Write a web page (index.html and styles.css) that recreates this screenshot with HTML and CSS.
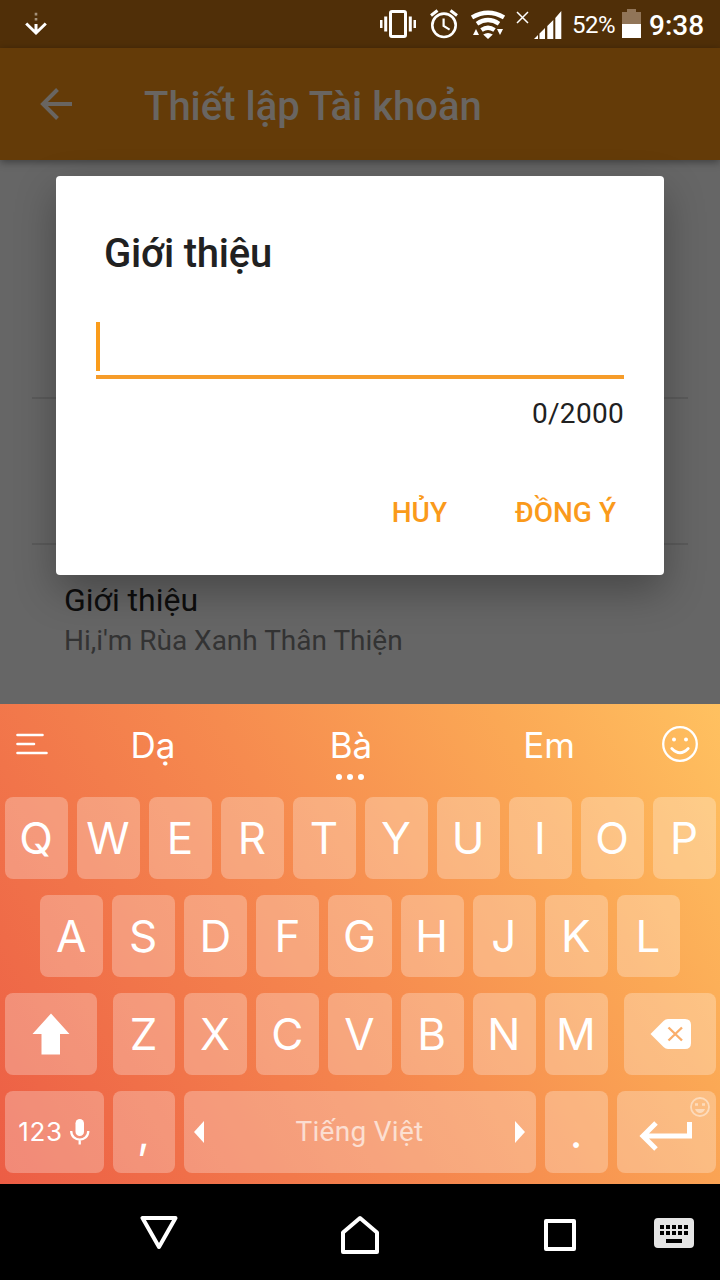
FILE: index.html
```html
<!DOCTYPE html>
<html lang="vi">
<head>
    <meta charset="UTF-8">
    <meta name="viewport" content="width=device-width, initial-scale=1.0">
    <title>Thiết lập Tài khoản</title>
    <link rel="stylesheet" href="styles.css">
</head>
<body>
    <div class="phone">
        <div class="status-bar">
            <svg class="download" width="24" height="48" viewBox="0 0 24 48">
                <path d="M10.7 12.8h2.6v2.6h-2.6zM10.7 18h2.6v2.6h-2.6z" fill="#a4917a"/>
                <path d="M12 24v8M2.200 23.500l9.800 9.500 9.800-9.500" fill="none" stroke="#fff" stroke-width="3"/>
            </svg>
            <div class="status-icons">
                <svg width="36" height="48" viewBox="0 0 36 48" fill="#fff">
                    <rect x="10.500" y="11.500" width="15" height="25" rx="1.500" fill="none" stroke="#fff" stroke-width="3"/>
                    <path d="M0 20h2.500v8H0zM4.200 16.500h3v15h-3zM28.800 16.500h3v15h-3zM33.500 20H36v8h-2.500z"/>
                </svg>
                <svg class="alarm" width="28" height="48" viewBox="0 0 28 48" fill="none" stroke="#fff">
                    <circle cx="14" cy="25.300" r="11.700" stroke-width="2.600"/>
                    <path d="M1 15.500l6.500-5M27 15.500l-6.500-5" stroke-width="3"/>
                    <path d="M13.600 18.500v7.500l6 3.600" stroke-width="2.200"/>
                </svg>
                <svg class="wifi" width="34" height="48" viewBox="0 0 34 48" fill="none" stroke="#fff">
                    <path d="M1 17.500q16-9.500 32 0M6 23.800q11-7.500 22 0M10.500 30q6.500-4.500 13 0" stroke-width="4.300"/>
                    <path d="M12.200 34.500q4.800-3 9.600 0L17 39zM2 35h6l-3-6zM26 29h6l-3 6z" fill="#fff" stroke="none"/>
                </svg>
                <svg class="signal" width="46" height="48" viewBox="0 0 46 48" fill="#fff">
                    <path d="M1 12l11 11M12 12L1 23" stroke="#fff" stroke-width="1.500"/>
                    <path d="M18 39l4-4v4zM23.500 33.500l5.500-5.500v11h-5.500zM31.300 26l6-6v19h-6zM39.300 18l6-7v28h-6z"/>
                </svg>
                <span class="percent">52%</span>
                <svg class="battery" width="19" height="48" viewBox="0 0 19 48">
                    <path d="M5 9h9v3h5v12H0V12h5z" fill="#917558"/>
                    <path d="M0 24h19v14H0z" fill="#fff"/>
                </svg>
                <span class="clock">9:38</span>
            </div>
        </div>

        <div class="app-bar">
            <svg class="back" width="32" height="32" viewBox="0 0 32 32" fill="none" stroke="#696561" stroke-width="4">
                <path d="M32 16H3M17.500 1.500L3 16l14.500 14.500"/>
            </svg>
            <h1>Thiết lập Tài khoản</h1>
        </div>

        <div class="settings">
            <div class="setting name"></div>
            <div class="setting gender"></div>
            <div class="setting intro">
                <div class="label">Giới thiệu</div>
                <div class="value">Hi,i'm Rùa Xanh Thân Thiện</div>
            </div>
        </div>

        <div class="dialog">
            <h2>Giới thiệu</h2>
            <div class="input"><span class="caret"></span></div>
            <div class="counter">0/2000</div>
            <div class="actions">
                <span>HỦY</span>
                <span>ĐỒNG Ý</span>
            </div>
        </div>

        <div class="keyboard">
            <div class="suggestions">
                <svg class="menu" width="32" height="24" viewBox="0 0 32 24" stroke="#fff" stroke-width="2.600" stroke-linecap="round">
                    <path d="M1.500 3h25M1.500 12h16.500M1.500 21h29"/>
                </svg>
                <span>Dạ</span>
                <span class="current">Bà</span>
                <span>Em</span>
                <svg class="emoji" width="36" height="36" viewBox="0 0 36 36" fill="none" stroke="#fff" stroke-width="2.300">
                    <circle cx="18" cy="18" r="16.800"/>
                    <path d="M9.800 22.500q8.200 8.500 16.400 0" stroke-width="2.800" stroke-linecap="round"/>
                    <circle cx="12" cy="13.500" r="2" fill="#fff" stroke="none"/>
                    <circle cx="24" cy="13.500" r="2" fill="#fff" stroke="none"/>
                </svg>
            </div>
            <div class="row">
                <div class="key">Q</div><div class="key">W</div><div class="key">E</div><div class="key">R</div><div class="key">T</div>
                <div class="key">Y</div><div class="key">U</div><div class="key">I</div><div class="key">O</div><div class="key">P</div>
            </div>
            <div class="row middle">
                <div class="key">A</div><div class="key">S</div><div class="key">D</div><div class="key">F</div><div class="key">G</div>
                <div class="key">H</div><div class="key">J</div><div class="key">K</div><div class="key">L</div>
            </div>
            <div class="row letters">
                <div class="key shift">
                    <svg width="38" height="42" viewBox="0 0 38 42"><path d="M19 .5L37.500 21H28v20.500H9.500V21H.5z" fill="#fff"/></svg>
                </div>
                <div class="key narrow">Z</div><div class="key">X</div><div class="key">C</div><div class="key">V</div>
                <div class="key">B</div><div class="key">N</div><div class="key">M</div>
                <div class="key delete">
                    <svg width="42" height="30" viewBox="0 0 42 30">
                        <path d="M.5 15L13.500 2Q15.500 0 18 0h17q6 0 6 6v18q0 6-6 6H18q-2.500 0-4.500-2z" fill="#fff"/>
                        <path d="M18.500 8.500l13.500 13M32 8.500l-13.500 13" stroke="#faae6b" stroke-width="2.400"/>
                    </svg>
                </div>
            </div>
            <div class="row bottom">
                <div class="key numbers">
                    <span>123</span>
                    <svg width="20" height="26" viewBox="0 0 20 26">
                        <rect x="5.500" y="0" width="8.500" height="17" rx="4.250" fill="#fff"/>
                        <path d="M1.200 12c0 11.500 17.100 11.500 17.100 0M9.700 20v5.500" fill="none" stroke="#fff" stroke-width="2.300"/>
                    </svg>
                </div>
                <div class="key narrow">,</div>
                <div class="key space">
                    <svg width="10" height="22" viewBox="0 0 10 22"><path d="M10 0v22L0 11z" fill="#fff"/></svg>
                    <span>Tiếng Việt</span>
                    <svg width="10" height="22" viewBox="0 0 10 22"><path d="M0 0v22l10-11z" fill="#fff"/></svg>
                </div>
                <div class="key period">.</div>
                <div class="key enter">
                    <svg width="54" height="30" viewBox="0 0 54 30" fill="none" stroke="#fff" stroke-width="5">
                        <path d="M50.500 1v14H4M17 2L4 15l13 13"/>
                    </svg>
                    <svg class="smile" width="20" height="20" viewBox="0 0 20 20" fill="none" stroke="#fff" stroke-width="1.800">
                        <circle cx="10" cy="10" r="9"/>
                        <path d="M5 12h10q-1.500 4-5 4t-5-4z" fill="#fff" stroke="none"/>
                        <path d="M5 7.500h3M12 7.500h3" stroke-width="2.500"/>
                    </svg>
                </div>
            </div>
        </div>

        <div class="nav-bar">
            <svg class="nav-back" width="38" height="36" viewBox="0 0 38 36"><path d="M2.500 3h33L19 32z"/></svg>
            <svg class="nav-home" width="40" height="40" viewBox="0 0 40 40"><path d="M3 37V17.500L20 3l17 14.500V37z"/></svg>
            <svg class="nav-recent" width="34" height="34" viewBox="0 0 34 34"><path d="M3 3h28v28H3z"/></svg>
            <svg class="nav-keyboard" width="40" height="30" viewBox="0 0 40 30">
                <rect x="1" y="1" width="38" height="28" rx="3"/>
                <path d="M6 9h29M6 15h29" stroke-dasharray="4 2"/>
                <path d="M12 23h16"/>
            </svg>
        </div>
    </div>
</body>
</html>
```
FILE: styles.css
```css
body {
    margin: 0;
    font-family: Roboto, sans-serif;
    background-color: #000;
}

svg {
    display: block;
    flex-shrink: 0;
}

.phone {
    position: relative;
    display: flex;
    flex-direction: column;
    width: 720px;
    height: 1280px;
    overflow: hidden;
    background-color: #666;
}

.status-bar {
    display: flex;
    justify-content: space-between;
    height: 48px;
    padding: 0 16px 0 24px;
    background-color: #502f08;
    color: #fff;
}

.status-icons {
    display: flex;
}

.alarm {
    margin-left: 14px;
}

.wifi {
    margin-left: 13px;
}

.signal {
    margin-left: 11px;
}

.percent {
    width: 43px;
    margin-left: 10px;
    font-size: 24px;
    line-height: 50px;
    letter-spacing: -0.5px;
}

.battery {
    margin-left: 7px;
}

.clock {
    width: 55px;
    margin-left: 8px;
    font-size: 28px;
    font-weight: 500;
    line-height: 52px;
}

.app-bar {
    z-index: 1;
    display: flex;
    align-items: center;
    height: 112px;
    padding-left: 40px;
    background-color: #643b08;
    box-shadow: 0 2px 8px rgba(0, 0, 0, 0.4);
}

.app-bar h1 {
    margin: 6px 0 0 72px;
    font-size: 40px;
    font-weight: 500;
    line-height: 48px;
    color: #696561;
}

.settings {
    height: 544px;
    padding: 0 32px;
}

.setting {
    box-sizing: border-box;
    border-bottom: 2px solid #5b5b5b;
}

.name {
    height: 239px;
}

.gender {
    height: 146px;
}

.intro {
    padding: 36px 32px;
    border: none;
}

.label {
    font-size: 32px;
    line-height: 38px;
    color: #0d0d0d;
}

.value {
    margin-top: 5px;
    font-size: 28px;
    line-height: 34px;
    color: #333;
}

.dialog {
    position: absolute;
    z-index: 2;
    top: 176px;
    left: 56px;
    box-sizing: border-box;
    width: 608px;
    height: 399px;
    padding: 54px 40px 0;
    border-radius: 4px;
    background-color: #fff;
    box-shadow: 0 16px 40px rgba(0, 0, 0, 0.3);
    color: #212121;
}

.dialog h2 {
    margin: 0 8px;
    font-size: 40px;
    font-weight: 500;
    line-height: 48px;
    letter-spacing: -0.2px;
}

.input {
    height: 53px;
    margin-top: 44px;
    border-bottom: 4px solid #f69c2a;
}

.caret {
    display: block;
    width: 4px;
    height: 49px;
    background-color: #fa9c1b;
}

.counter {
    margin-top: 18px;
    font-size: 28px;
    line-height: 34px;
    letter-spacing: 0.3px;
    text-align: right;
}

.actions {
    display: flex;
    justify-content: flex-end;
    gap: 68px;
    margin: 65px 8px 0 0;
    font-size: 28px;
    font-weight: 500;
    line-height: 34px;
    color: #fa9a1b;
}

.keyboard {
    display: flex;
    flex-direction: column;
    gap: 16px;
    height: 480px;
    background: linear-gradient(60deg, #ec5d45 0%, #f68b4f 49%, #fba855 77%, #ffc160 100%);
    font-family: Inter, sans-serif;
    color: #fff;
}

.suggestions {
    display: flex;
    align-items: center;
    height: 77px;
    padding: 3px 22px 0 16px;
    box-sizing: border-box;
}

.menu {
    margin-right: 6px;
}

.emoji {
    margin-left: auto;
}

.suggestions span {
    flex: 0 0 198px;
    padding-top: 2px;
    font-size: 35px;
    line-height: 44px;
    text-align: center;
}

.suggestions .current {
    position: relative;
}

/* three dots under the middle word */
.current::after {
    content: "";
    position: absolute;
    top: 53px;
    left: 50%;
    width: 6px;
    height: 6px;
    margin-left: -4px;
    border-radius: 50%;
    background-color: #fff;
    box-shadow: -11px 0 #fff, 11px 0 #fff;
}

.row {
    display: flex;
    gap: 9px;
    height: 82px;
    padding: 0 4px 0 5px;
}

.key {
    flex: 1;
    display: flex;
    align-items: center;
    justify-content: center;
    box-sizing: border-box;
    padding-right: 1px;
    border-radius: 8px;
    background-color: rgba(255, 255, 255, 0.27);
    font-size: 44px;
    font-weight: 400;
    line-height: 80px;
}

.middle {
    padding: 0 40px;
}

.shift {
    flex: 0 0 92px;
    margin-right: 7px;
}

.delete {
    flex: 0 0 92px;
    margin-left: 7px;
    padding: 0 0 0 2px;
}

.numbers,
.enter {
    flex: 0 0 99px;
}

.numbers {
    gap: 7px;
    font-size: 26px;
    letter-spacing: 0.7px;
}

.narrow {
    flex: 0 0 62px;
}

.period {
    flex: 0 0 63px;
}

.space {
    justify-content: space-between;
    padding: 0 11px 0 10px;
    font-family: Roboto, sans-serif;
    font-size: 28px;
    letter-spacing: 0.3px;
}

.space span {
    opacity: 0.65;
}

.enter {
    position: relative;
    padding-top: 8px;
}

.smile {
    position: absolute;
    top: 6px;
    right: 6px;
    opacity: 0.45;
}

.nav-bar {
    display: flex;
    align-items: flex-start;
    height: 96px;
    background-color: #000;
    fill: none;
    stroke: #fff;
    stroke-width: 4;
    stroke-linejoin: round;
}

.nav-back {
    margin: 31px 0 0 140px;
}

.nav-home {
    margin: 31px 0 0 162px;
}

.nav-recent {
    margin: 34px 0 0 163px;
}

.nav-keyboard {
    margin: 34px 0 0 77px;
}

.nav-keyboard rect {
    fill: #e5e5e5;
    stroke: #e5e5e5;
    stroke-width: 2;
}

.nav-keyboard path {
    stroke: #000;
}
```
